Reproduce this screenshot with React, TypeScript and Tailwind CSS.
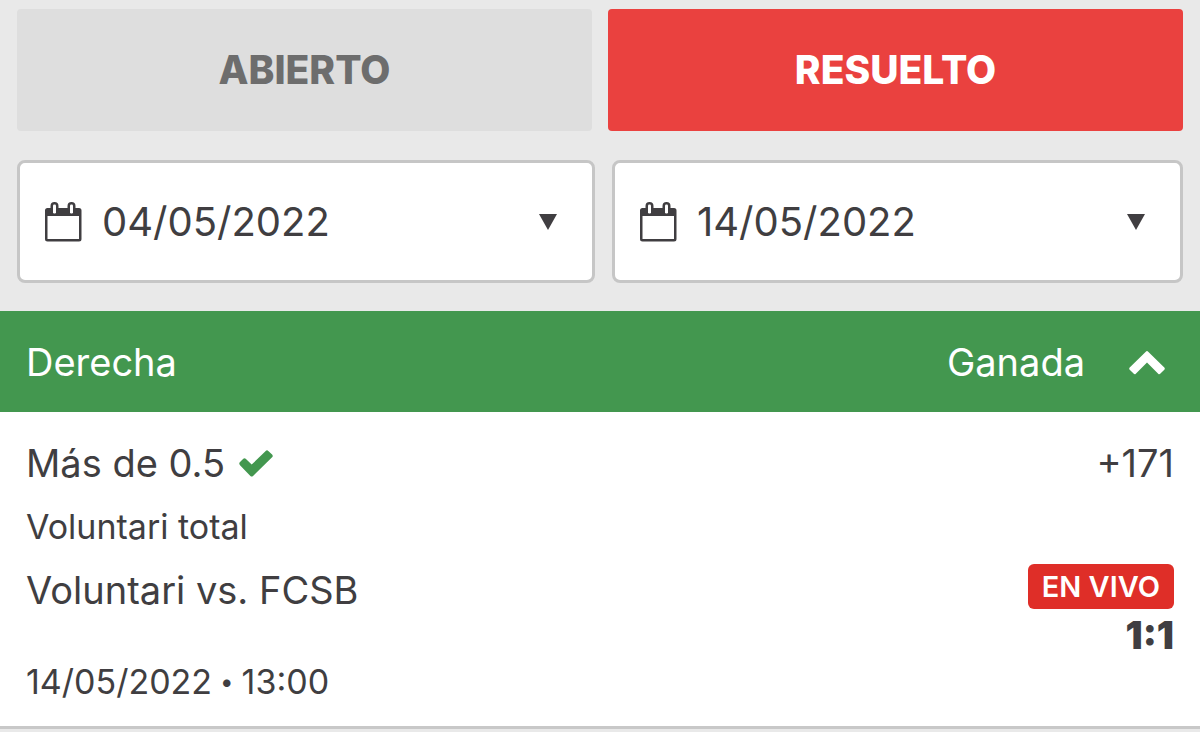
import { useState } from 'react';

function CalendarIcon() {
  return (
    <svg viewBox="0 0 38 40" className="h-10 w-[38px] shrink-0" fill="none" aria-hidden="true">
      <path
        fill="#403e41"
        fillRule="evenodd"
        d="M3.500 6H6.500V4A4 4 0 0 1 14.500 4V6H23.500V4A4 4 0 0 1 31.500 4V6H35A2.500 2.500 0 0 1 37.500 8.500V37A2.500 2.500 0 0 1 35 39.500H3.500A2.500 2.500 0 0 1 1 37V8.500A2.500 2.500 0 0 1 3.500 6ZM3.500 14V37H35V14Z"
      />
      <rect x="9" y="2.500" width="3" height="9" rx="1.300" fill="#fff" />
      <rect x="26" y="2.500" width="3" height="9" rx="1.300" fill="#fff" />
    </svg>
  );
}

function DateField({ label, options }: { label: string; options: string[] }) {
  return (
    <label className="flex h-[123px] items-center rounded-lg border-3 border-[#c6c6c6] bg-white pr-[35px] pl-6">
      <CalendarIcon />
      <select
        aria-label={label}
        className="ml-5 min-w-0 flex-1 appearance-none bg-transparent text-[40px] leading-[48px] outline-none"
      >
        {options.map((o) => (
          <option key={o}>{o}</option>
        ))}
      </select>
      <svg viewBox="0 0 18 16" className="h-4 w-[18px] shrink-0" aria-hidden="true">
        <path d="M0 0H18L9 16Z" fill="#403e41" />
      </svg>
    </label>
  );
}

export default function App() {
  const [tab, setTab] = useState('RESUELTO');
  const [open, setOpen] = useState(true);

  return (
    <div className="min-h-screen bg-[#e9e9e9] font-['Inter',sans-serif] text-[#403e41]">
      <div className="px-[17px] pt-[9px] pb-7">
        <div className="grid grid-cols-2 gap-4">
          {['ABIERTO', 'RESUELTO'].map((name) => (
            <button
              key={name}
              type="button"
              aria-pressed={tab === name}
              onClick={() => setTab(name)}
              className={
                tab === name
                  ? 'h-[122px] rounded-sm bg-[#ea413f] text-[39px] font-extrabold text-white'
                  : 'h-[122px] rounded-sm bg-[#dedede] text-[39px] font-extrabold text-[#6d6d6d]'
              }
            >
              {name}
            </button>
          ))}
        </div>
        <div className="mt-[29px] grid grid-cols-[578fr_571fr] gap-[17px]">
          <DateField label="Desde" options={['04/05/2022']} />
          <DateField label="Hasta" options={['14/05/2022']} />
        </div>
      </div>

      <button
        type="button"
        aria-expanded={open}
        onClick={() => setOpen(!open)}
        className="flex h-[101px] w-full items-center bg-[#43974f] pt-0.5 pr-[35px] pl-[26px] text-[38px] text-white"
      >
        <span className="flex-1 text-left">Derecha</span>
        <span>Ganada</span>
        <svg
          viewBox="0 0 36 24"
          className={open ? 'ml-11 h-6 w-9' : 'ml-11 h-6 w-9 rotate-180'}
          aria-hidden="true"
        >
          <path
            d="M16.800 0.700Q18 -0.500 19.200 0.700L35.300 16.600Q36.300 17.700 35.300 18.700L31.200 22.800Q30.200 23.700 29.200 22.700L18 11.500L6.800 22.700Q5.800 23.700 4.800 22.800L0.700 18.700Q-0.300 17.700 0.700 16.600Z"
            fill="#fff"
          />
        </svg>
      </button>

      {open && (
        <div className="border-b-3 border-[#c8c8c8] bg-white px-[26px] pt-[27px] pb-6">
          <div className="flex items-center justify-between text-[38px] leading-[48px]">
            <span className="flex items-center gap-[14px]">
              Más de 0.5
              <svg viewBox="0 0 34 27" className="h-[27px] w-[34px]" aria-hidden="true">
                <path
                  d="M1 12L4.300 8.700Q5.500 7.600 6.700 8.700L12.700 14.600L26.700 0.900Q28 -0.300 29.300 0.900L33.100 4.600Q34.400 5.900 33.100 7.200L14 26Q12.700 27.200 11.400 26L1 15.200Q-0.500 13.600 1 12Z"
                  fill="#43974f"
                />
              </svg>
            </span>
            <span>+171</span>
          </div>
          <div className="mt-5 text-[34px] leading-10">Voluntari total</div>
          <div className="flex items-start justify-between pt-[17px]">
            <div>
              <div className="text-[38px] leading-[52px]">Voluntari vs. FCSB</div>
              <div className="mt-[46px] flex items-center gap-2 text-[34px] leading-10">
                <span>14/05/2022</span>
                <span className="text-[24px]">•</span>
                <span>13:00</span>
              </div>
            </div>
            <div className="flex flex-col items-end">
              <span className="flex h-[45px] items-center rounded-md bg-[#df2e28] px-[14px] text-[29px] font-semibold text-white">
                EN VIVO
              </span>
              <span className="mt-1 text-[38px] leading-[44px] font-black">1:1</span>
            </div>
          </div>
        </div>
      )}
    </div>
  );
}
